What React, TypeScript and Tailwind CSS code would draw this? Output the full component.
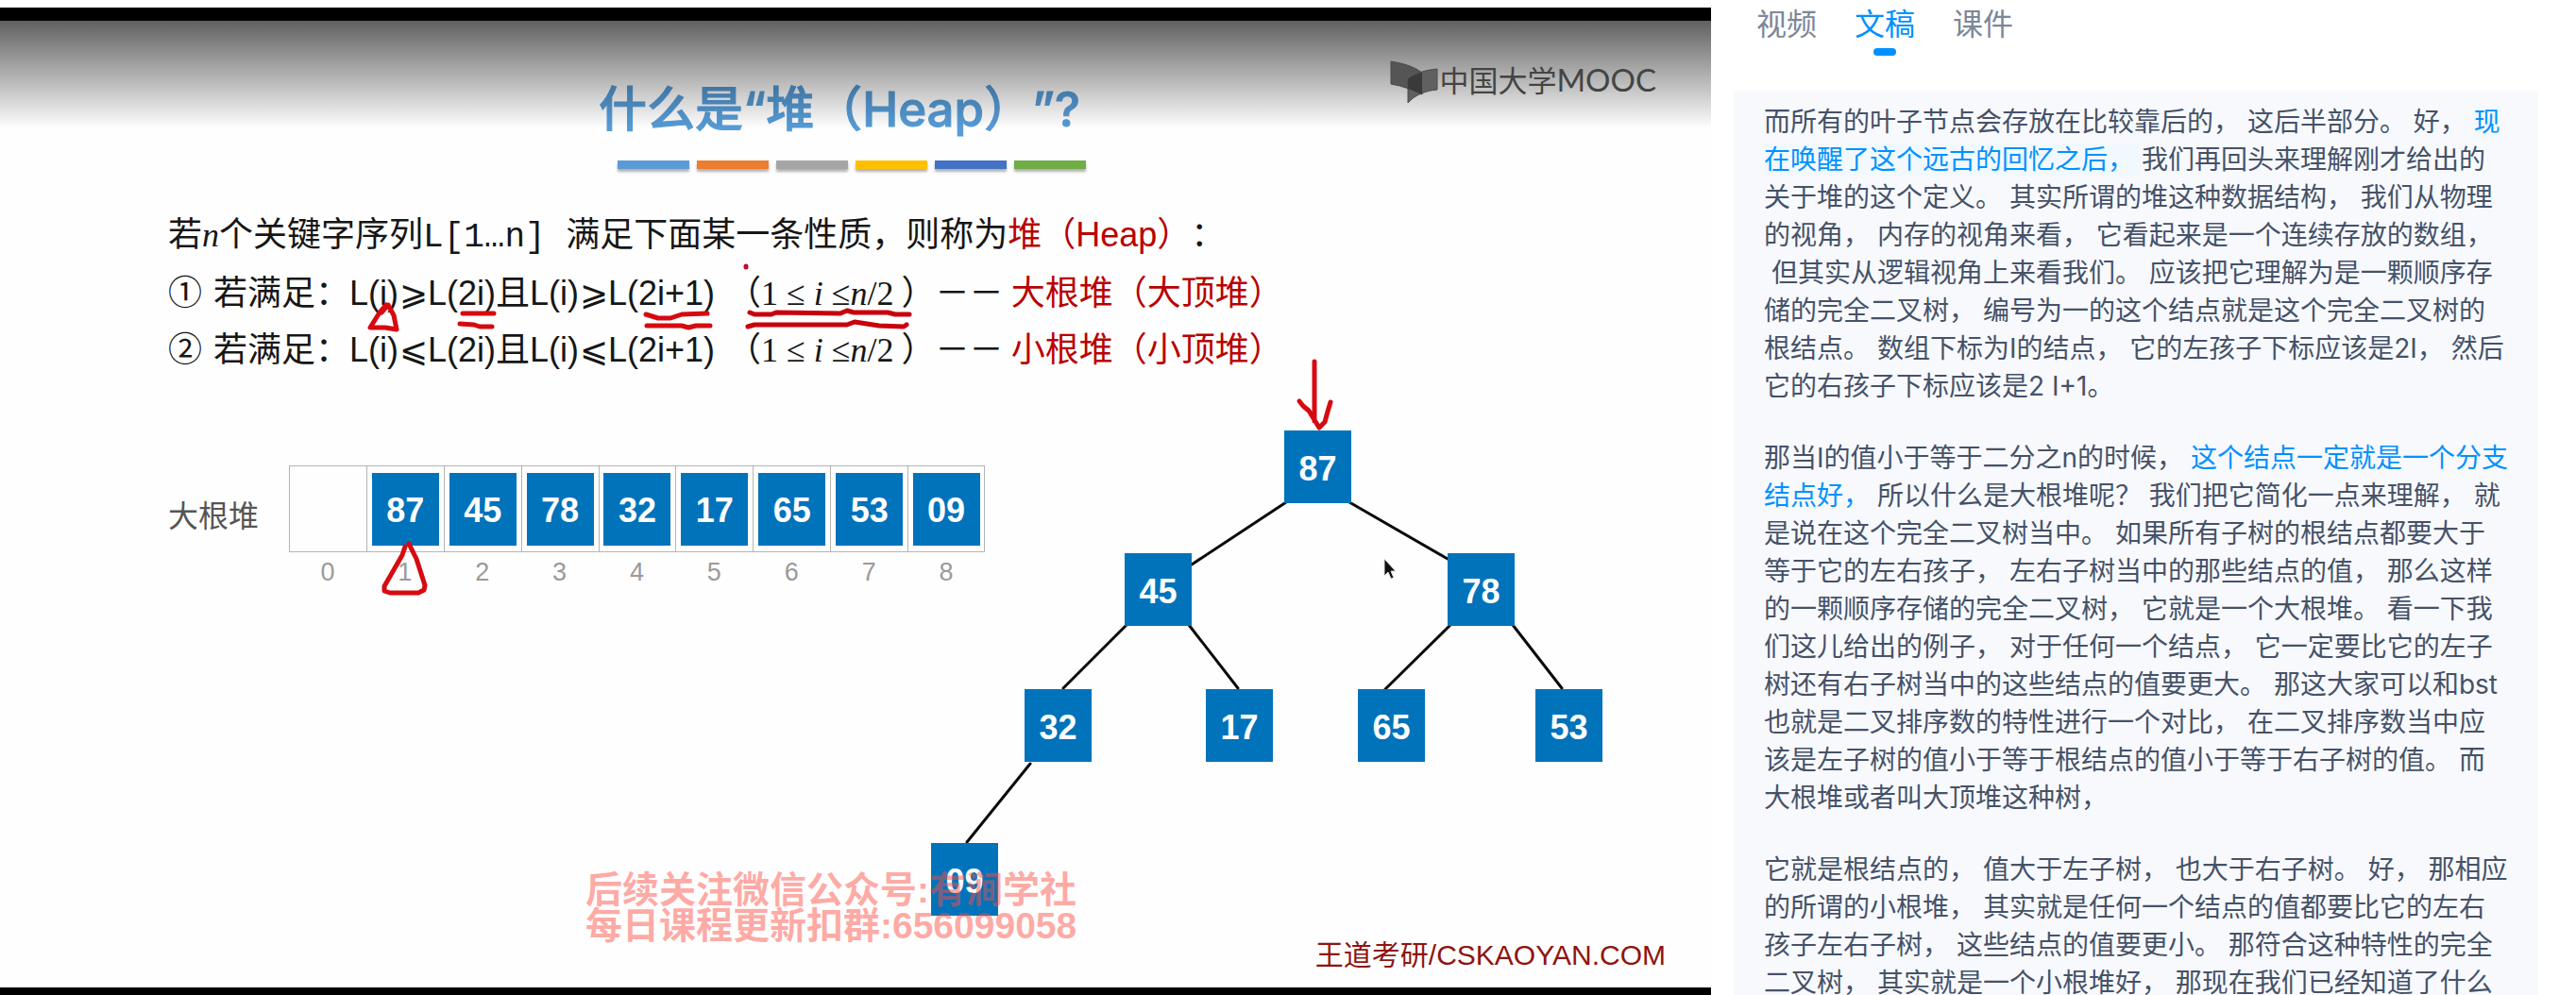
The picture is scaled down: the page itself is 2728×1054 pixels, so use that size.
import React, { useState } from "react";

const CJK = "font-['Inter','Noto_Sans_CJK_SC',sans-serif]";
const SLIDE = "font-['Liberation_Sans','Noto_Sans_CJK_SC',sans-serif] [text-spacing-trim:space-all]";
const SERIF = "font-['Liberation_Serif',serif]";

const bars = ["bg-[#5b9bd5]", "bg-[#ed7d31]", "bg-[#a5a5a5]", "bg-[#ffc000]", "bg-[#4472c4]", "bg-[#70ad47]"];

const heap = ["", "87", "45", "78", "32", "17", "65", "53", "09"];

const nodes = [
  { value: "87", x: 1360, y: 456 },
  { value: "45", x: 1191, y: 586 },
  { value: "78", x: 1533, y: 586 },
  { value: "32", x: 1085, y: 730 },
  { value: "17", x: 1277, y: 730 },
  { value: "65", x: 1438, y: 730 },
  { value: "53", x: 1626, y: 730 },
  { value: "09", x: 986, y: 893 },
];

type Piece = string | { mark: string; tint?: boolean };

const paragraphs: Piece[][][] = [
  [
    ["而所有的叶子节点会存放在比较靠后的， 这后半部分。 好， ", { mark: "现", tint: true }],
    [{ mark: "在唤醒了这个远古的回忆之后， ", tint: true }, "我们再回头来理解刚才给出的"],
    ["关于堆的这个定义。 其实所谓的堆这种数据结构， 我们从物理"],
    ["的视角， 内存的视角来看， 它看起来是一个连续存放的数组，"],
    [" 但其实从逻辑视角上来看我们。 应该把它理解为是一颗顺序存"],
    ["储的完全二叉树， 编号为一的这个结点就是这个完全二叉树的"],
    ["根结点。 数组下标为I的结点， 它的左孩子下标应该是2I， 然后"],
    ["它的右孩子下标应该是2 I+1。"],
  ],
  [
    ["那当I的值小于等于二分之n的时候， ", { mark: "这个结点一定就是一个分支" }],
    [{ mark: "结点好，" }, " 所以什么是大根堆呢？ 我们把它简化一点来理解， 就"],
    ["是说在这个完全二叉树当中。 如果所有子树的根结点都要大于"],
    ["等于它的左右孩子， 左右子树当中的那些结点的值， 那么这样"],
    ["的一颗顺序存储的完全二叉树， 它就是一个大根堆。 看一下我"],
    ["们这儿给出的例子， 对于任何一个结点， 它一定要比它的左子"],
    ["树还有右子树当中的这些结点的值要更大。 那这大家可以和bst"],
    ["也就是二叉排序数的特性进行一个对比， 在二叉排序数当中应"],
    ["该是左子树的值小于等于根结点的值小于等于右子树的值。 而"],
    ["大根堆或者叫大顶堆这种树，"],
  ],
  [
    ["它就是根结点的， 值大于左子树， 也大于右子树。 好， 那相应"],
    ["的所谓的小根堆， 其实就是任何一个结点的值都要比它的左右"],
    ["孩子左右子树， 这些结点的值要更小。 那符合这种特性的完全"],
    ["二叉树， 其实就是一个小根堆好， 那现在我们已经知道了什么"],
  ],
];

function Logo() {
  return (
    <div className="absolute right-[58px] top-[40px] flex items-start text-[#444]">
      <svg width="52" height="46" viewBox="0 0 52 46" className="mt-[2px]" aria-hidden="true">
        <path d="M1 1 C13 3 25 6 34 13 V36 C24 31 13 27 1 25 Z" fill="#555" stroke="#4a4a4a" />
        <path d="M19 20 C28 13 38 10 50 9 V31 C38 32 27 36 19 45 Z" fill="#606060" stroke="#4a4a4a" />
        <path d="M19 20 C24 16 28 14 34 13 V36 L19 30 Z" fill="#3a3a3a" />
      </svg>
      <span className="flex items-baseline whitespace-nowrap font-['Noto_Sans_CJK_SC',sans-serif] text-[31px] leading-[44px]">
        中国大学<span className="font-['Lato',sans-serif] text-[33px] font-normal">MOOC</span>
      </span>
    </div>
  );
}

function Rule({ index, sign, name, alias }: { index: string; sign: string; name: string; alias: string }) {
  return (
    <li className="flex whitespace-pre">
      <span className="w-[48px]">{index}</span>
      <span>若满足：</span>
      <span className="flex w-[400px]">
        <span>L(i)</span>
        <span className="w-[31px] text-center">{sign}</span>
        <span>L(2i)且L(i)</span>
        <span className="w-[31px] text-center">{sign}</span>
        <span>L(2i+1)</span>
      </span>
      <span>（</span>
      <span className={`pr-2 ${SERIF}`}>
        1 ≤ <i>i</i> ≤<i>n</i>/2
      </span>
      <span>）</span>
      <span>－－</span>
      <span className="ml-2 text-[#b80000]">
        {name}（{alias}）
      </span>
    </li>
  );
}

function Annotations() {
  return (
    <svg
      className="pointer-events-none absolute left-0 top-0 h-[1054px] w-[1812px]"
      viewBox="0 0 1812 1054"
      fill="none"
      stroke="#d60a10"
      strokeWidth="5"
      strokeLinecap="round"
      strokeLinejoin="round"
      aria-hidden="true"
    >
      <path d="M409 323 L402 331 L392 347 L408 347 L420 349 L417 334 L411 323 L404 331" />
      <path d="M490 332 H523 M487 343 L502 344 L508 346 H521" />
      <path d="M684 333 L697 337 L710 337 L722 333 L749 332 M685 345 H722 L729 347 L737 345 H752" />
      <path d="M794 331 L799 333 H817 L822 331 L890 332 L897 329 L904 331 L940 331 L948 333 H963" stroke="#c8000c" />
      <path d="M792 346 L799 344 H897 L905 341 L931 345 L957 346 L960 344" stroke="#c8000c" />
      <path d="M790 282 V283" stroke="#b8102a" />
      <path d="M429 579 L426 588 L407 621 V626 L413 628 H443 L449 625 L450 620 L441 592 L433 576" />
      <path d="M1392 383 V446 M1376 425 L1380 430 L1386 435 L1397 453 L1403 447 L1406 436 L1409 426" />
    </svg>
  );
}

function Tree() {
  return (
    <>
      <svg className="absolute left-0 top-0 h-[1054px] w-[1812px]" viewBox="0 0 1812 1054" stroke="#0a0a0a" strokeWidth="3" strokeLinecap="round" aria-hidden="true">
        <path d="M1362 532 L1262 598 M1429 532 L1533 592 M1193 662 L1126 729 M1259 662 L1311 729 M1536 662 L1467 730 M1602 662 L1654 729 M1091 809 L1024 892" />
      </svg>
      {nodes.map((n) => (
        <div
          key={n.value}
          className="absolute flex h-[77px] w-[71px] items-center justify-center bg-[#0073bb] pt-1 text-[36px] leading-none font-bold text-white"
          style={{ left: n.x, top: n.y }}
        >
          {n.value}
        </div>
      ))}
      <svg className="absolute left-[1464px] top-[591px]" width="18" height="26" viewBox="0 0 18 26" aria-hidden="true">
        <path d="M2 1 V19 L6 15 L9 22 L12 21 L9 14 H14 Z" fill="#111" stroke="#ddd" strokeWidth="1" />
      </svg>
    </>
  );
}

function Slide() {
  return (
    <section aria-label="视频" className={`relative overflow-hidden bg-white pt-2 ${SLIDE}`}>
      <div className="flex h-full flex-col border-t-[14px] border-b-[8px] border-black bg-[#fefefe]">
        <h1 className="mt-16 whitespace-nowrap pl-[634px] font-['Inter','Noto_Sans_CJK_SC',sans-serif] text-[51px] leading-[60px] font-medium text-[#559bd6] [-webkit-text-stroke:1px]">
          什么是“堆（Heap）”?
        </h1>
        <div className="mt-6 flex gap-2 pl-[654px]">
          {bars.map((b) => (
            <span key={b} className={`h-[9px] w-[76px] shadow-[0_3px_3px_rgba(0,0,0,0.3)] ${b}`} />
          ))}
        </div>

        <div className="mt-[41px] pl-[178px] text-[36px] leading-[60px] text-[#161616]">
          <p className="leading-[58px] whitespace-pre">
            若<i className={SERIF}>n</i>个关键字序列
            <span className="font-['Liberation_Mono',monospace]">L[1…n] </span>
            满足下面某一条性质，则称为<span className="text-[#b80000]">堆（Heap）</span>：
          </p>
          <ol>
            <Rule index="①" sign="⩾" name="大根堆" alias="大顶堆" />
            <Rule index="②" sign="⩽" name="小根堆" alias="小顶堆" />
          </ol>
        </div>

        <div className="mt-[92px] flex pl-[178px]">
          <span className="w-[128px] pt-[30px] text-[32px] leading-[48px] text-[#555]">大根堆</span>
          <ol className="grid w-[737px] grid-cols-9">
            {heap.map((v, i) => (
              <li key={i} className="text-center">
                <div className={`flex h-[92px] items-center justify-center border-y border-l border-[#b4b4b4] ${i === 8 ? "border-r" : ""}`}>
                  {v && (
                    <span className="flex h-[77px] w-[71px] items-center justify-center bg-[#0073bb] pt-1 text-[36px] leading-none font-bold text-white">
                      {v}
                    </span>
                  )}
                </div>
                <span className="block pt-[5px] text-[27px] leading-[32px] text-[#9a9a9a]">{i}</span>
              </li>
            ))}
          </ol>
        </div>

        <footer className="mt-auto pr-[48px] pb-4 text-right text-[30px] leading-[36px] text-[#8f1410]">
          王道考研/CSKAOYAN.COM
        </footer>
      </div>

      <Tree />
      <p className="absolute left-[620px] top-[924px] whitespace-nowrap text-[39px] leading-[38px] font-bold text-[rgba(255,75,65,0.47)]">
        后续关注微信公众号:有涧学社
        <br />
        每日课程更新扣群:656099058
      </p>
      <Annotations />
      <div className="absolute inset-x-0 top-[22px] h-[114px] bg-linear-to-b from-black/62 to-black/0">
        <Logo />
      </div>
    </section>
  );
}

function Transcript() {
  const tabs = ["视频", "文稿", "课件"];
  const [active, setActive] = useState("文稿");
  return (
    <aside className={`flex flex-col overflow-hidden pr-10 pl-6 ${CJK}`}>
      <div role="tablist" className="flex h-24 shrink-0 gap-10 pt-px pl-6 text-[32px]">
        {tabs.map((t) => (
          <button
            key={t}
            role="tab"
            aria-selected={t === active}
            onClick={() => setActive(t)}
            className={`flex flex-col items-center self-start leading-[50px] ${t === active ? "text-[#0091ff]" : "text-[#7c8799]"}`}
          >
            {t}
            {t === active && <span className="h-2 w-6 rounded-full bg-[#0091ff]" />}
          </button>
        ))}
      </div>
      <div className="flex flex-1 flex-col gap-9 bg-[#f8f9fd] px-8 pt-[13px] text-[28px] leading-[40px] text-[#455268]">
        {paragraphs.map((lines, p) => (
          <p key={p}>
            {lines.map((pieces, l) => (
              <span key={l} className="block whitespace-pre">
                {pieces.map((s, k) =>
                  typeof s === "string" ? (
                    s
                  ) : (
                    <mark key={k} className={`text-[#0091ff] ${s.tint ? "bg-[#f1f9ff]" : "bg-transparent"}`}>
                      {s.mark}
                    </mark>
                  )
                )}
              </span>
            ))}
          </p>
        ))}
      </div>
    </aside>
  );
}

export default function App() {
  return (
    <main className="grid h-screen grid-cols-[1812fr_916fr] overflow-hidden bg-white">
      <Slide />
      <Transcript />
    </main>
  );
}
